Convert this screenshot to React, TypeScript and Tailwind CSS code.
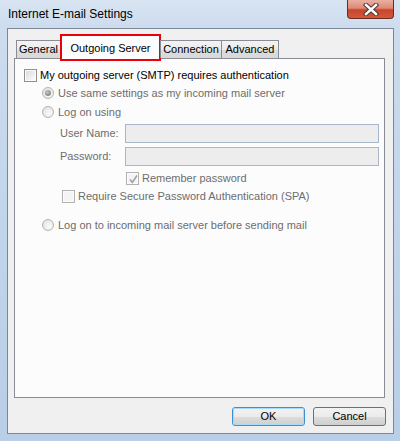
import React from "react";

const font = { fontFamily: '"Liberation Sans", Arial, sans-serif' };

function Checkbox({ checked = false, disabled = false }: { checked?: boolean; disabled?: boolean }) {
  return (
    <div
      className={`w-[13px] h-[13px] shrink-0 border relative ${
        disabled ? "border-[#b1b1b1]" : "border-[#8f8f8f]"
      }`}
    >
      <div
        className={`absolute inset-[1px] ${
          disabled
            ? "bg-[#f4f4f4]"
            : "bg-[linear-gradient(135deg,#dcdcdc_0%,#eeeeee_60%,#ffffff_100%)]"
        }`}
      />
      {checked && (
        <svg className="absolute left-[1px] top-[1px]" width="11" height="11" viewBox="0 0 11 11">
          <path d="M2 5.5 L4.3 8.5 L9 1.5" fill="none" stroke="#a2a2a2" strokeWidth="1.6" />
        </svg>
      )}
    </div>
  );
}

function Radio({ checked = false }: { checked?: boolean }) {
  return (
    <div className="w-[12px] h-[12px] shrink-0 rounded-full border border-[#b4b4b4] bg-[radial-gradient(circle_at_65%_65%,#fbfbfb_0%,#e6e6e6_70%,#d8d8d8_100%)] flex items-center justify-center">
      {checked && (
        <div className="w-[6px] h-[6px] rounded-full bg-[radial-gradient(circle_at_40%_35%,#c8c8c8_0%,#8e8e8e_60%,#7a7a7a_100%)]" />
      )}
    </div>
  );
}

function Tab({ label, w }: { label: string; w: string }) {
  return (
    <div
      className={`${w} h-[18px] border border-b-0 border-[#898c95] bg-[linear-gradient(180deg,#f3f3f3_0%,#ebebeb_50%,#dddddd_51%,#d9d9d9_100%)] flex items-center justify-center text-[11px] text-black -ml-px first:ml-0`}
    >
      {label}
    </div>
  );
}

function Button({ label, def = false }: { label: string; def?: boolean }) {
  return (
    <div
      className={`w-[73px] h-[19px] rounded-[3px] border flex items-center justify-center text-[11px] text-black relative ${
        def ? "border-[#3c8fd0]" : "border-[#707070]"
      } bg-[linear-gradient(180deg,#f2f2f2_0%,#ebebeb_50%,#dddddd_51%,#cfcfcf_100%)]`}
    >
      {def && <div className="absolute inset-0 rounded-[2px] border border-[#a6dcf8]" />}
      <span className="relative">{label}</span>
    </div>
  );
}

export default function App() {
  return (
    <div
      style={font}
      className="w-[400px] h-[441px] flex flex-col bg-[linear-gradient(180deg,#d8e4f1_0%,#cddcee_28px,#bfd3ea_60%,#b9cee7_100%)] overflow-hidden"
    >
      {/* Title bar */}
      <div className="h-[28px] flex items-start shrink-0">
        <div className="pl-[8px] pt-[7px] text-[12px] leading-[14px] text-black">Internet E-mail Settings</div>
        <div className="ml-auto mr-[6px] w-[47px] h-[19px] rounded-b-[4px] border border-t-0 border-[#6e2a1f] bg-[linear-gradient(180deg,#eab0a2_0%,#dd8a75_45%,#c8442b_55%,#d25a3c_100%)] flex items-center justify-center">
          <svg width="16" height="13" viewBox="0 0 16 13">
            <path d="M3 2 L13 11 M13 2 L3 11" stroke="#4a3a36" strokeWidth="4.5" strokeLinecap="square" />
            <path d="M3 2 L13 11 M13 2 L3 11" stroke="#ffffff" strokeWidth="2.4" strokeLinecap="square" />
          </svg>
        </div>
      </div>

      {/* Client area */}
      <div className="ml-[7px] mr-[6px] mb-[7px] flex-1 border border-[#7b8795] bg-[#f0f0f0] flex flex-col">
        {/* Tabs */}
        <div className="pt-[5px] pl-[8px] h-[29px] shrink-0 flex items-end relative z-10">
          <Tab label="General" w="w-[45px]" />
          <div className="w-[101px] h-[27px] -mb-[3px] border-2 border-[#e8000b] bg-[#fcfcfc] flex items-start justify-center pt-[4px] text-[11px] text-black -ml-px">
            Outgoing Server
          </div>
          <Tab label="Connection" w="w-[62px]" />
          <Tab label="Advanced" w="w-[58px]" />
        </div>

        {/* Panel */}
        <div className="ml-[6px] mr-[8px] flex-1 border border-[#898c95] bg-[#fcfcfc] flex flex-col text-[11px]">
          <div className="pt-[7px] h-[25px] flex items-end">
            <div className="h-[18px] flex items-center pl-[9px] gap-[3px] text-black">
              <Checkbox />
              <span>My outgoing server (SMTP) requires authentication</span>
            </div>
          </div>
          <div className="h-[18px] flex items-center pl-[27px] gap-[4px] text-[#6d6d6d]">
            <Radio checked />
            <span>Use same settings as my incoming mail server</span>
          </div>
          <div className="mt-[1px] h-[18px] flex items-center pl-[27px] gap-[4px] text-[#6d6d6d]">
            <Radio />
            <span>Log on using</span>
          </div>
          <div className="mt-[3px] h-[19px] flex items-center pl-[45px] text-[#6d6d6d]">
            <span className="w-[65px]">User Name:</span>
            <div className="w-[254px] h-[19px] border border-[#a9b7ca] bg-[#ededed]" />
          </div>
          <div className="mt-[4px] h-[19px] flex items-center pl-[45px] text-[#6d6d6d]">
            <span className="w-[65px]">Password:</span>
            <div className="w-[254px] h-[19px] border border-[#a9b7ca] bg-[#ededed]" />
          </div>
          <div className="mt-[3px] h-[18px] flex items-center pl-[111px] gap-[3px] text-[#6d6d6d]">
            <Checkbox checked disabled />
            <span>Remember password</span>
          </div>
          <div className="h-[18px] flex items-center pl-[47px] gap-[3px] text-[#6d6d6d]">
            <Checkbox disabled />
            <span>Require Secure Password Authentication (SPA)</span>
          </div>
          <div className="mt-[11px] h-[18px] flex items-center pl-[27px] gap-[4px] text-[#6d6d6d]">
            <Radio />
            <span>Log on to incoming mail server before sending mail</span>
          </div>
        </div>

        {/* Buttons */}
        <div className="h-[35px] shrink-0 flex items-center justify-end gap-[8px] pr-[7px] pt-[1px]">
          <Button label="OK" def />
          <Button label="Cancel" />
        </div>
      </div>
    </div>
  );
}
